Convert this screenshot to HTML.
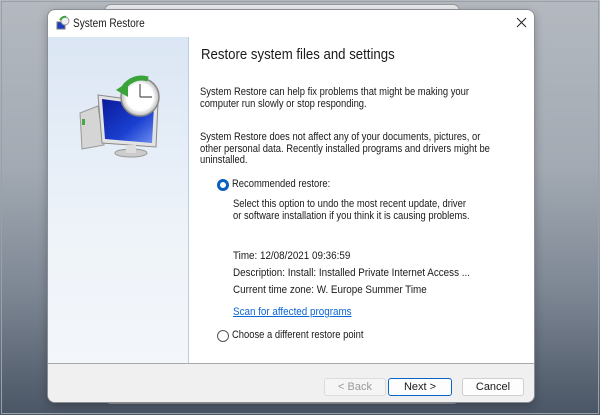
<!DOCTYPE html>
<html><head><meta charset="utf-8"><style>
*{margin:0;padding:0;box-sizing:border-box}
body{width:600px;height:415px;overflow:hidden;font-family:"Liberation Sans",sans-serif;font-size:11px;color:#1a1a1a;
background:linear-gradient(180deg,#b4b9c0 0%,#a3aab3 40%,#7d8794 70%,#4a5565 100%);position:relative}
.abs{position:absolute}
.frame{left:1px;top:1px;width:598px;height:413px;border:1px solid #9aa0a8}
.back2{left:105px;top:5px;width:354px;height:398px;background:#e9ebee;border-radius:6px;box-shadow:0 0 0 1px #999}
.dlg{left:48px;top:10px;width:486px;height:392px;background:#fff;border-radius:7px;box-shadow:0 0 0 1px #8b8f95,0 3px 10px rgba(0,0,0,.3);overflow:hidden}
.left{left:0;top:27px;width:141px;height:326px;background:linear-gradient(180deg,#dbe6f4,#eef3f9 60%,#f3f6fa);border-right:1px solid #b9cde6}
.foot{left:0;top:353px;width:486px;height:39px;background:#f0f0f0;border-top:1px solid #a9a9a9}
.btn{top:14px;height:18px;border:1px solid #cfcfcf;border-radius:3px;background:#fdfdfd;text-align:center;line-height:16px;font-size:11px}
p{position:absolute;line-height:11.5px;white-space:nowrap;transform:scaleX(.84);transform-origin:0 0;font-size:11.2px}
p.d{transform:scaleX(.88)}
.radio{width:12px;height:12px;border-radius:50%}
</style></head><body>
<div class="abs frame"></div>
<div class="abs back2"></div>
<div class="abs dlg">
  <svg class="abs" style="left:7px;top:5px" width="16" height="16" viewBox="0 0 16 16">
    <rect x="2" y="7" width="8" height="7" fill="#1c3cc0" stroke="#777" stroke-width="1"/>
    <circle cx="10" cy="6" r="4" fill="#eee" stroke="#999"/>
    <path d="M5 5 Q8 1 11 2" stroke="#3aa33a" stroke-width="2" fill="none"/>
  </svg>
  <div class="abs" style="left:25px;top:6px;font-size:12px;transform:scaleX(.84);transform-origin:0 0;white-space:nowrap">System Restore</div>
  <svg class="abs" style="left:468px;top:7px" width="11" height="11" viewBox="0 0 11 11"><path d="M1 1L10 10M10 1L1 10" stroke="#222" stroke-width="1"/></svg>
  <div class="abs left">
    <svg class="abs" style="left:28px;top:36px" width="95" height="85" viewBox="0 0 95 85">
      <defs>
        <linearGradient id="scr" x1="0" y1="0" x2="1" y2="1"><stop offset="0" stop-color="#0a1a9a"/><stop offset=".6" stop-color="#1a3fd0"/><stop offset="1" stop-color="#6d8ff0"/></linearGradient>
        <radialGradient id="clk"><stop offset=".7" stop-color="#fff"/><stop offset="1" stop-color="#bbb"/></radialGradient>
      </defs>
      <path d="M4 40 L22 33 L28 72 L6 76 Z" fill="#d5d5d5" stroke="#9a9a9a"/>
      <rect x="6" y="46" width="3" height="6" fill="#4a4"/>
      <path d="M22 22 L82 30 L80 74 L26 70 Z" fill="#e3e3e3" stroke="#8a8a8a"/>
      <path d="M26 26 L78 33 L76 70 L29 66 Z" fill="url(#scr)"/>
      <ellipse cx="55" cy="80" rx="16" ry="4" fill="#ccc" stroke="#999"/>
      <rect x="50" y="72" width="10" height="8" fill="#ddd"/>
      <circle cx="64" cy="24" r="19" fill="url(#clk)" stroke="#888" stroke-width="1.5"/>
      <path d="M64 24 L64 11 M64 24 L76 24" stroke="#555" stroke-width="1.2"/>
      <path d="M48 14 Q58 2 72 6" stroke="#3aa33a" stroke-width="5" fill="none"/>
      <path d="M40 17 L52 9 L52 24 Z" fill="#3aa33a"/>
    </svg>
  </div>
  <div class="abs" style="left:153px;top:36px;font-size:15px;transform:scaleX(.88);transform-origin:0 0;white-space:nowrap">Restore system files and settings</div>
  <p style="left:152px;top:77px">System Restore can help fix problems that might be making your<br>computer run slowly or stop responding.</p>
  <p style="left:152px;top:122px">System Restore does not affect any of your documents, pictures, or<br>other personal data. Recently installed programs and drivers might be<br>uninstalled.</p>
  <div class="abs radio" style="left:169px;top:169px;border:3.5px solid #0a5fbf;background:#fff"></div>
  <p style="left:184px;top:169px">Recommended restore:</p>
  <p style="left:185px;top:189px">Select this option to undo the most recent update, driver<br>or software installation if you think it is causing problems.</p>
  <p class="d" style="left:185px;top:241px">Time: 12/08/2021 09:36:59</p>
  <p class="d" style="left:185px;top:258px">Description: Install: Installed Private Internet Access ...</p>
  <p class="d" style="left:185px;top:275px">Current time zone: W. Europe Summer Time</p>
  <p class="d" style="left:185px;top:297px;color:#0b66d6;text-decoration:underline">Scan for affected programs</p>
  <div class="abs radio" style="left:169px;top:320px;border:1px solid #555;background:#fff"></div>
  <p style="left:184px;top:320px">Choose a different restore point</p>
  <div class="abs foot">
    <div class="abs btn" style="left:276px;width:62px;color:#9a9a9a;background:#f5f5f5;border-color:#dcdcdc">&lt; Back</div>
    <div class="abs btn" style="left:340px;width:64px;border-color:#0a64c8">Next &gt;</div>
    <div class="abs btn" style="left:414px;width:62px">Cancel</div>
  </div>
</div>
</body></html>
